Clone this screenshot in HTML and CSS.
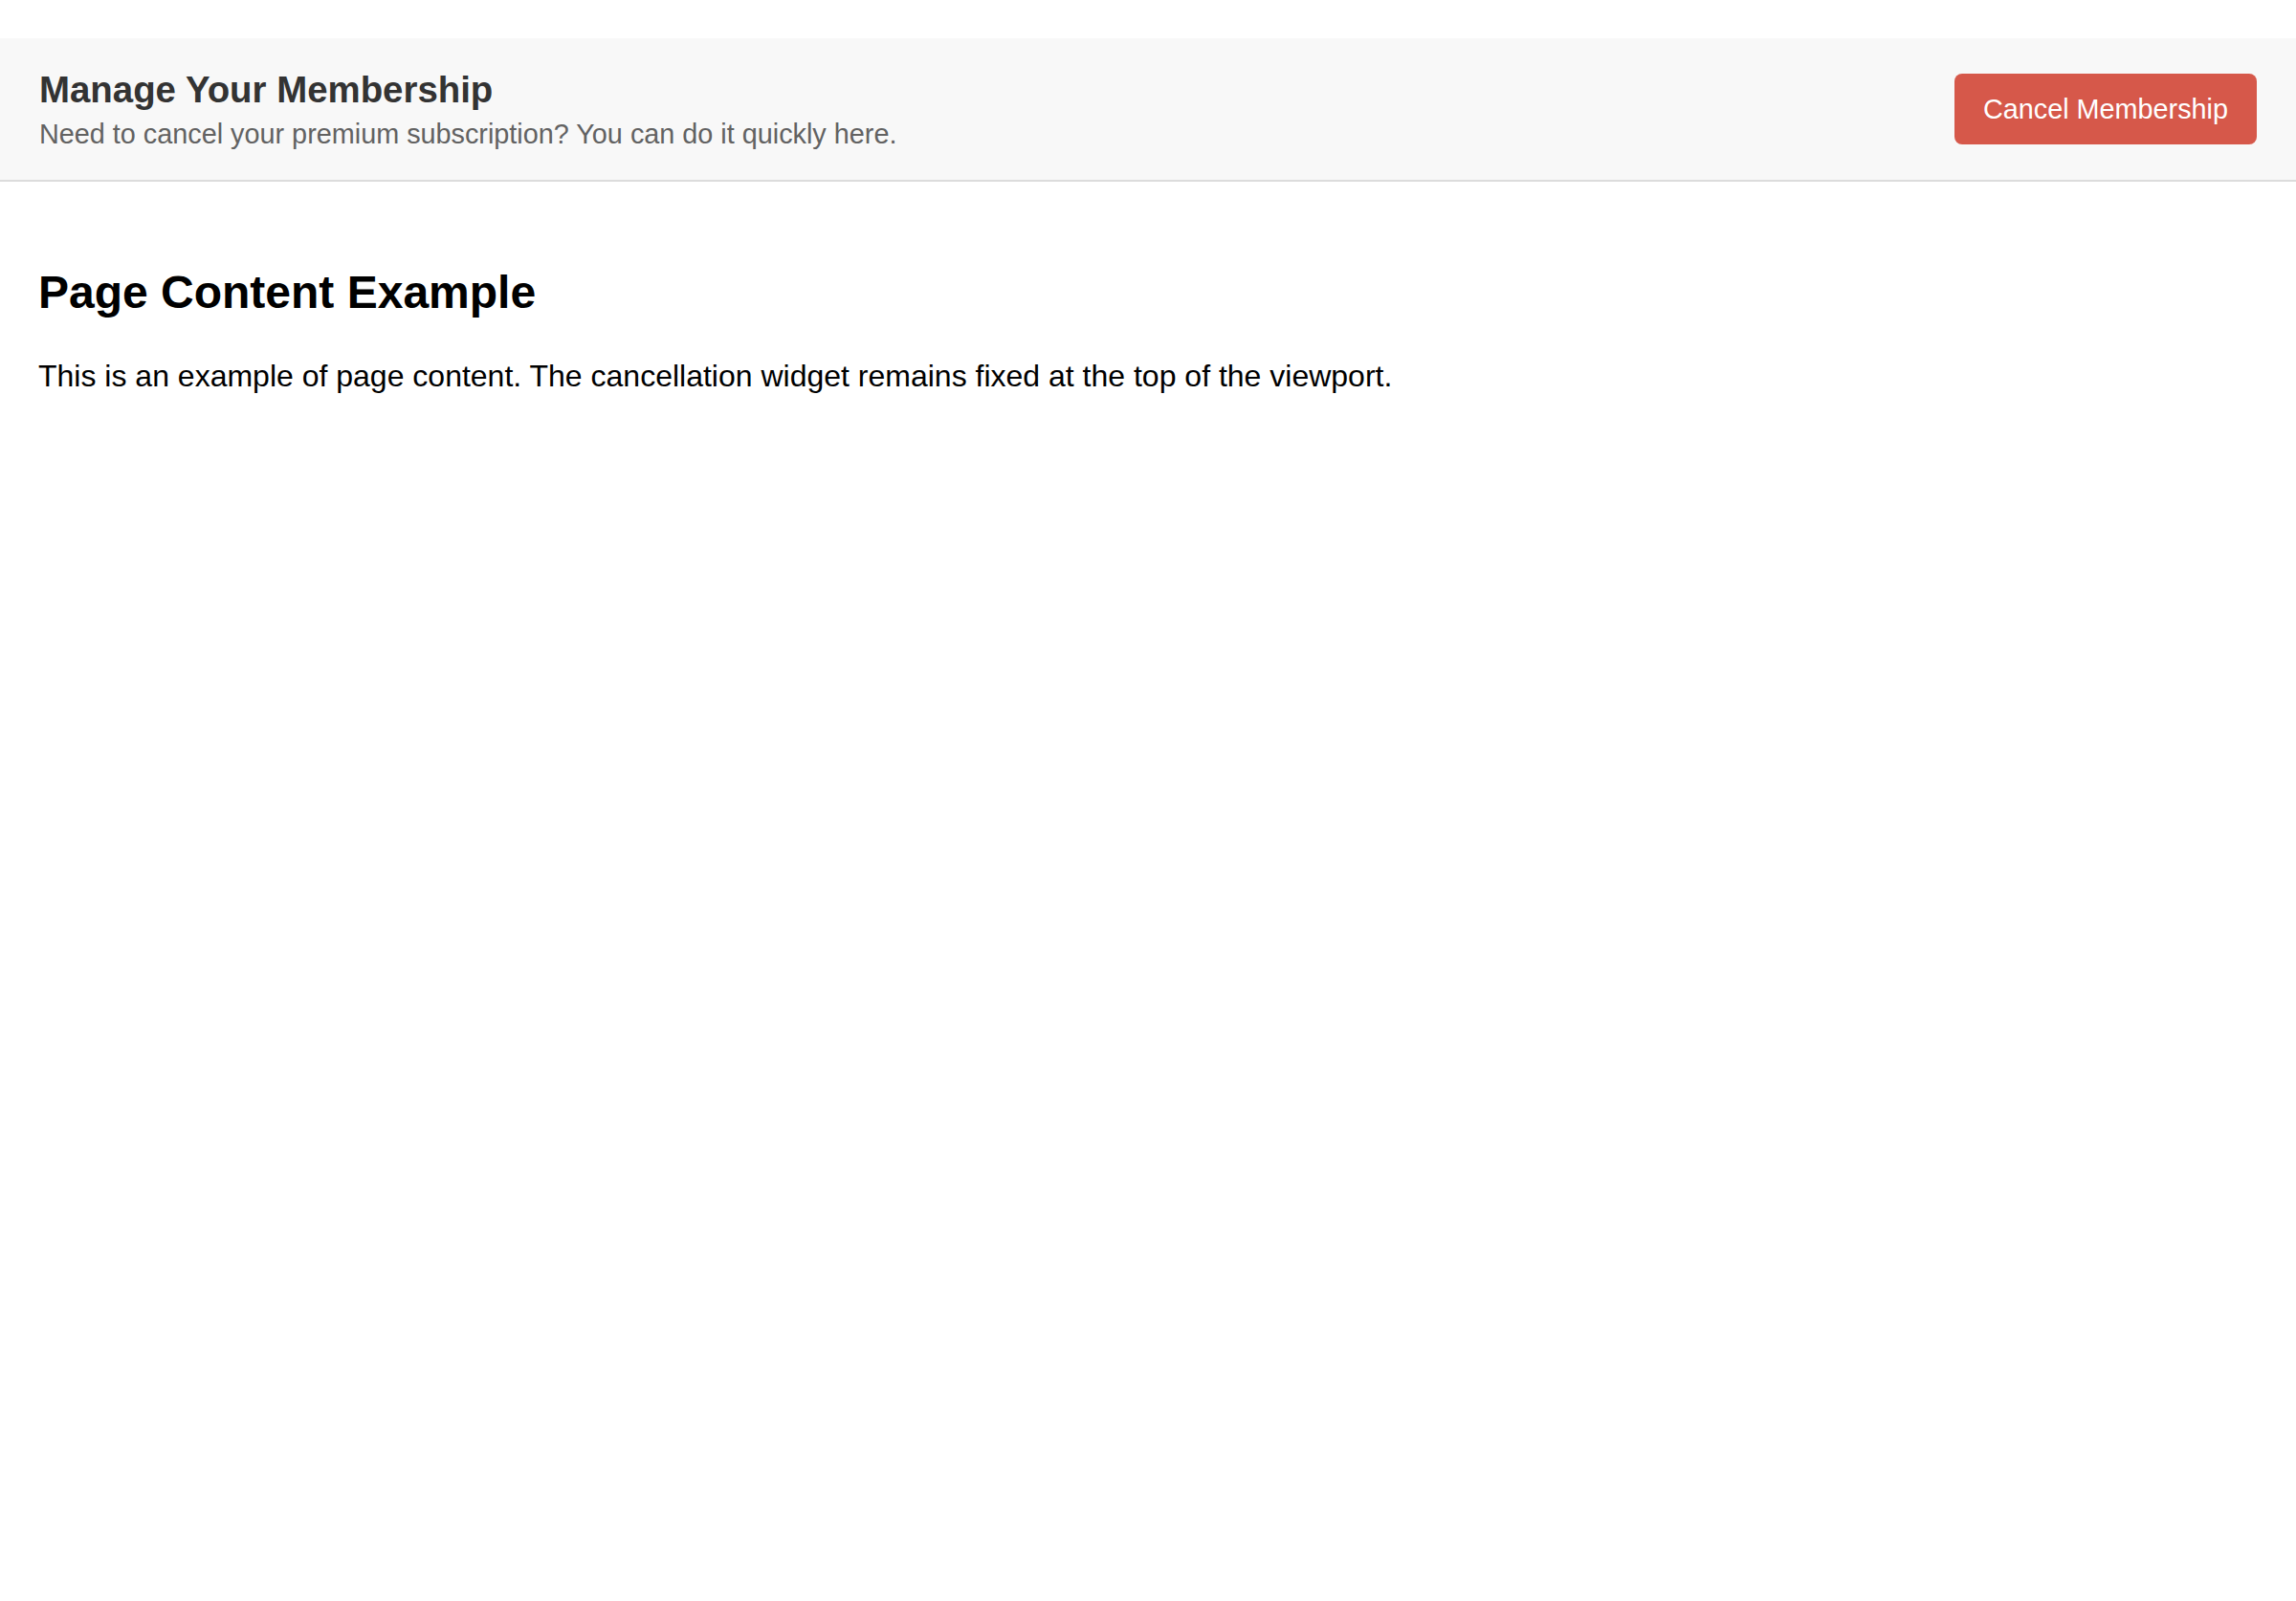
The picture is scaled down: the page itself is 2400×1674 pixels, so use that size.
FILE: index.html
```html
<!DOCTYPE html>
<html lang="en">
<head>
<meta charset="utf-8">
<title>Manage Your Membership</title>
<link rel="stylesheet" href="styles.css">
</head>
<body>
<div class="page">
  <header class="widget">
    <div class="widget-text">
      <h3 class="widget-title">Manage Your Membership</h3>
      <p class="widget-sub">Need to cancel your premium subscription? You can do it quickly here.</p>
    </div>
    <button class="cancel-btn" type="button">Cancel Membership</button>
  </header>
  <main class="content">
    <h2 class="content-title">Page Content Example</h2>
    <p class="content-text">This is an example of page content. The cancellation widget remains fixed at the top of the viewport.</p>
  </main>
</div>
</body>
</html>
```

FILE: styles.css
```css
html, body {
  margin: 0;
  padding: 0;
  background: #ffffff;
}

body {
  font-family: "Liberation Sans", Arial, Helvetica, sans-serif;
  color: #000000;
}

.page {
  padding-top: 40px;
}

.widget {
  display: flex;
  align-items: center;
  justify-content: space-between;
  background: #f8f8f8;
  border-bottom: 2px solid #dcdcdc;
  padding: 32px 41px 32px 41px;
}

.widget-text {
  display: flex;
  flex-direction: column;
}

.widget-title {
  margin: 0 0 8px 0;
  font-size: 38.4px;
  line-height: 44px;
  font-weight: bold;
  color: #333333;
}

.widget-sub {
  margin: 0;
  font-size: 28.8px;
  line-height: 32px;
  color: #626262;
}

.cancel-btn {
  font-family: "Liberation Sans", Arial, Helvetica, sans-serif;
  font-size: 28.8px;
  line-height: 34px;
  color: #ffffff;
  background: #d6584a;
  border: none;
  border-radius: 8px;
  padding: 20px 30px;
  cursor: pointer;
}

.content {
  padding: 88px 40px 0 40px;
}

.content-title {
  margin: 0 0 39px 0;
  font-size: 48px;
  line-height: 56px;
  font-weight: bold;
}

.content-text {
  margin: 0;
  font-size: 32px;
  line-height: 40px;
}
```
